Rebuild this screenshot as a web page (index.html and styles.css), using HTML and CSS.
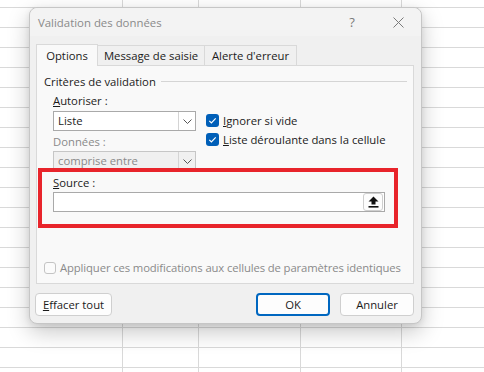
FILE: index.html
```html
<!DOCTYPE html>
<html lang="fr">
<head>
    <meta charset="UTF-8">
    <meta name="viewport" content="width=device-width, initial-scale=1.0">
    <title>Validation des données</title>
    <link rel="stylesheet" href="styles.css">
</head>
<body>
    <div class="sheet">
        <div class="col c1"></div>
        <div class="col c2"></div>
        <div class="col c3"></div>
        <div class="col c4"></div>
        <div class="col c5"></div>
    </div>

    <div class="dialog">
        <div class="titlebar">
            <span class="title">Validation des données</span>
            <span class="tb-btn help">?</span>
            <span class="tb-btn close">
                <svg width="11" height="11" viewBox="0 0 11 11"><path d="M0.5 0.5 L10.5 10.5 M10.5 0.5 L0.5 10.5" stroke="#7a7a7a" stroke-width="1" fill="none"/></svg>
            </span>
        </div>
        <div class="content">
            <div class="tabs">
                <div class="tab active">Options</div>
                <div class="tab t2">Message de saisie</div>
                <div class="tab t3">Alerte d'erreur</div>
            </div>
            <div class="panel">
                <div class="group-title"><span>Critères de validation</span><i class="rule"></i></div>
                <div class="criteria">
                    <div class="left">
                        <div class="lbl"><u>A</u>utoriser :</div>
                        <div class="combo">
                            <span class="value">Liste</span>
                            <span class="drop"><svg width="9" height="5" viewBox="0 0 9 5"><polyline points="0.5,0.5 4.5,4.5 8.5,0.5" stroke="#555" stroke-width="1" fill="none"/></svg></span>
                        </div>
                        <div class="lbl gray">Données :</div>
                        <div class="combo off">
                            <span class="value">comprise entre</span>
                            <span class="drop"><svg width="9" height="5" viewBox="0 0 9 5"><polyline points="0.5,0.5 4.5,4.5 8.5,0.5" stroke="#555" stroke-width="1" fill="none"/></svg></span>
                        </div>
                    </div>
                    <div class="right">
                        <div class="check">
                            <span class="box on"><svg width="13" height="13" viewBox="0 0 13 13"><polyline points="3.3,6.8 5.4,8.9 9.7,4.4" stroke="#fff" stroke-width="1.2" fill="none"/></svg></span>
                            <span><u>I</u>gnorer si vide</span>
                        </div>
                        <div class="check">
                            <span class="box on"><svg width="13" height="13" viewBox="0 0 13 13"><polyline points="3.3,6.8 5.4,8.9 9.7,4.4" stroke="#fff" stroke-width="1.2" fill="none"/></svg></span>
                            <span><u>L</u>iste déroulante dans la cellule</span>
                        </div>
                    </div>
                </div>
                <div class="lbl src-lbl"><u>S</u>ource :</div>
                <div class="source">
                    <span class="pick">
                        <svg width="11" height="12" viewBox="0 0 11 12"><polygon points="5.5,0.5 0.5,5.5 3.5,5.5 3.5,8.5 7.5,8.5 7.5,5.5 10.5,5.5" fill="#111"/><rect x="0.5" y="10" width="10" height="1.6" fill="#111"/></svg>
                    </span>
                </div>
                <div class="check apply">
                    <span class="box"></span>
                    <span>Appliquer ces modifications aux cellules de paramètres identiques</span>
                </div>
                <div class="highlight"></div>
            </div>
            <div class="footer">
                <button class="btn clear"><u>E</u>ffacer tout</button>
                <button class="btn primary">OK</button>
                <button class="btn">Annuler</button>
            </div>
        </div>
    </div>
</body>
</html>
```

FILE: styles.css
```css
* {
    box-sizing: border-box;
}
body {
    margin: 0;
    width: 484px;
    height: 372px;
    overflow: hidden;
    position: relative;
    font-family: "Open Sans", "Noto Sans", sans-serif;
    font-size: 11.3px;
    color: #1b1b1b;
}

/* feuille de calcul derrière */
.sheet {
    display: flex;
    height: 372px;
    background-color: #fff;
    background-image: linear-gradient(#d9d9d9 1px, transparent 1px);
    background-size: 100% 20px;
    background-position: 0 7px;
}
.col {
    border-right: 1px solid #d9d9d9;
    height: 100%;
}
.c1 { width: 123px; }
.c2 { width: 76px; }
.c3 { width: 102px; }
.c4 { width: 101px; }
.c5 { flex: 1; border-right: 0; }

/* fenêtre */
.dialog {
    position: absolute;
    left: 29px;
    top: 7px;
    width: 393px;
    height: 317px;
    background: #f0f0f0;
    border: 1px solid #c6c6c6;
    border-radius: 8px;
    box-shadow: 0 8px 22px rgba(0, 0, 0, 0.22), 0 2px 6px rgba(0, 0, 0, 0.08);
}
.titlebar {
    display: flex;
    align-items: center;
    height: 28px;
    padding-left: 8px;
    background: #f3f3f3;
    border-radius: 8px 8px 0 0;
    color: #8a8a8a;
    font-size: 11.4px;
}
.title {
    flex: 1;
}
.tb-btn {
    display: flex;
    align-items: center;
    justify-content: center;
    width: 46px;
    height: 28px;
    color: #7a7a7a;
    font-size: 13px;
}

.content {
    padding: 8px 7px 0 6px;
}
.tabs {
    display: flex;
    align-items: flex-end;
    height: 21px;
}
.tab {
    height: 20px;
    line-height: 19px;
    text-align: center;
    border: 1px solid #d9d9d9;
    border-left: 0;
    border-bottom: 0;
    background: #f0f0f0;
}
.tab.active {
    width: 62px;
    height: 22px;
    line-height: 21px;
    margin-bottom: -1px;
    border-left: 1px solid #d9d9d9;
    background: #f9f9f9;
    position: relative;
    z-index: 1;
}
.t2 { width: 107px; }
.t3 { width: 92px; }

.panel {
    position: relative;
    width: 378px;
    height: 219px;
    border: 1px solid #d9d9d9;
    background: #f9f9f9;
    padding: 7px 6px 0 7px;
}
.group-title {
    display: flex;
    align-items: center;
    height: 16px;
    gap: 5px;
}
.rule {
    flex: 1;
    border-top: 1px solid #d5d5d5;
}

.lbl {
    height: 16px;
    line-height: 16px;
}
.gray {
    color: #8a8a8a;
}

.criteria {
    display: flex;
    gap: 10px;
    padding-left: 9px;
    margin-top: 4px;
}
.left {
    width: 143px;
}
.left .lbl {
    margin-bottom: 2px;
}
.combo {
    display: flex;
    height: 20px;
    border: 1px solid #a9a9a9;
    background: #fff;
}
.combo .value {
    flex: 1;
    padding-left: 4px;
    line-height: 18px;
}
.drop {
    display: flex;
    align-items: center;
    justify-content: center;
    width: 17px;
    border-left: 1px solid #d4d4d4;
}
.combo.off {
    border-color: #c6c6c6;
    background: #f0f0f0;
    color: #8a8a8a;
}
.combo + .lbl {
    margin-top: 3px;
    margin-bottom: 1px;
}

.right {
    padding-top: 18px;
}
.check {
    display: flex;
    align-items: center;
    gap: 4px;
    height: 19px;
    white-space: nowrap;
}
.box {
    display: flex;
    flex-shrink: 0;
    width: 13px;
    height: 13px;
    border: 1px solid #b5b5b5;
    border-radius: 3px;
    background: #fbfbfb;
}
.box.on {
    border: 0;
    background: #005fb8;
}

.src-lbl {
    margin: 4px 0 1px 9px;
}
.source {
    display: flex;
    justify-content: flex-end;
    align-items: center;
    width: 332px;
    height: 20px;
    margin-left: 9px;
    padding-right: 1px;
    border: 1px solid #a9a9a9;
    background: #fff;
}
.pick {
    display: flex;
    align-items: center;
    justify-content: center;
    width: 20px;
    height: 18px;
    border: 1px solid #cfcfcf;
    border-radius: 3px;
    background: #fdfdfd;
}

.apply {
    margin-top: 46px;
    color: #8a8a8a;
    letter-spacing: -0.12px;
}
.apply .box {
    width: 12px;
    height: 12px;
    border-color: #c4c4c4;
}

/* cadre rouge d'annotation */
.highlight {
    position: absolute;
    left: 1px;
    top: 102px;
    width: 360px;
    height: 60px;
    border: 4px solid #e8242b;
}

.footer {
    display: flex;
    gap: 10px;
    margin-top: 9px;
}
.btn {
    width: 74px;
    height: 23px;
    padding: 0;
    font: inherit;
    color: #1b1b1b;
    background: #fdfdfd;
    border: 1px solid #cfcfcf;
    border-radius: 4px;
}
.clear {
    width: 77px;
    margin-left: -1px;
    margin-right: auto;
}
.primary {
    border: 2px solid #0067c0;
}
u {
    text-underline-offset: 1px;
}
```
